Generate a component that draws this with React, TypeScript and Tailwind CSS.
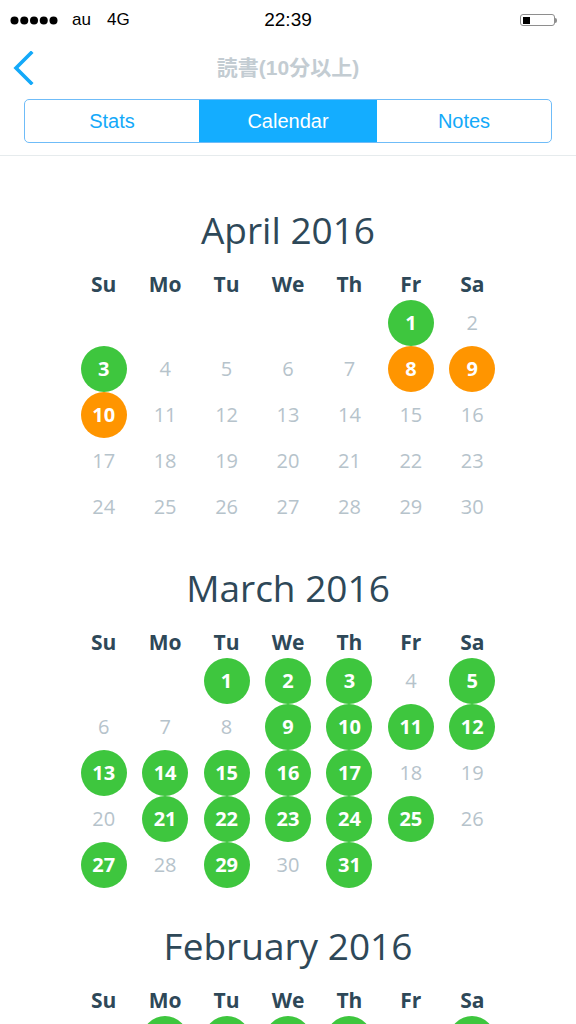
type Month = {
  title: string;
  offset: number;
  days: number;
  green: number[];
  orange: number[];
};

const weekdays = ['Su', 'Mo', 'Tu', 'We', 'Th', 'Fr', 'Sa'];

const months: Month[] = [
  { title: 'April 2016', offset: 5, days: 30, green: [1, 3], orange: [8, 9, 10] },
  {
    title: 'March 2016',
    offset: 2,
    days: 31,
    green: [1, 2, 3, 5, 9, 10, 11, 12, 13, 14, 15, 16, 17, 21, 22, 23, 24, 25, 27, 29, 31],
    orange: [],
  },
  { title: 'February 2016', offset: 1, days: 29, green: [1, 2, 3, 4, 6, 8, 9, 10], orange: [] },
];

function StatusBar() {
  return (
    <div className="relative flex h-10 items-center px-[10px] font-['Liberation_Sans',sans-serif] text-[17px] text-black">
      <svg width="48" height="9" viewBox="0 0 48 9">
        {[4.5, 14.25, 24, 33.75, 43.5].map((cx) => (
          <circle key={cx} cx={cx} cy="4.5" r="4" fill="#000" />
        ))}
      </svg>
      <span className="ml-[14px]">au</span>
      <span className="ml-[16px]">4G</span>
      <span className="absolute left-1/2 -translate-x-1/2 text-[19px]">22:39</span>
      <div className="ml-auto mr-[9px] flex items-center">
        <div className="flex h-[12px] w-[35px] items-center rounded-[3px] border border-[#8e8e8e] p-[1.5px]">
          <div className="h-full w-[7px] bg-black" />
        </div>
        <div className="h-[5px] w-[2px] rounded-r-sm bg-[#8e8e8e]" />
      </div>
    </div>
  );
}

function NavBar() {
  return (
    <div className="border-b border-[#e6ebed] pb-[12px]">
      <div className="relative flex h-[55px] items-center">
        <svg className="ml-[12px]" width="22" height="34" viewBox="0 0 22 34">
          <path d="M19 2 L4 17 L19 32" fill="none" stroke="#14a9f9" strokeWidth="3.6" strokeLinecap="square" />
        </svg>
        <span className="absolute left-1/2 -translate-x-1/2 font-['Liberation_Sans','Noto_Sans_CJK_JP',sans-serif] text-[21px] font-bold text-[#c3ccd2]">
          読書(10分以上)
        </span>
      </div>
      <div className="mx-[24px] mt-[4px] flex h-[44px] overflow-hidden rounded-[5px] border border-[#6fbcf8] font-['Liberation_Sans',sans-serif] text-[20px]">
        <div className="flex flex-1 items-center justify-center text-[#14a9f9]">Stats</div>
        <div className="flex w-[178px] items-center justify-center bg-[#14adff] text-white">Calendar</div>
        <div className="flex flex-1 items-center justify-center text-[#14a9f9]">Notes</div>
      </div>
    </div>
  );
}

function MonthBlock({ month }: { month: Month }) {
  const cells: (number | null)[] = [];
  for (let i = 0; i < month.offset; i++) cells.push(null);
  for (let d = 1; d <= month.days; d++) cells.push(d);

  return (
    <div className="mb-[32px]">
      <h2 className="h-[52px] text-center text-[37px] leading-[52px] text-[#2e4858]">{month.title}</h2>
      <div className="mx-auto mt-[13px] w-[430px]">
        <div className="mb-[1px] grid h-[30px] grid-cols-7 items-center">
          {weekdays.map((w) => (
            <div key={w} className="text-center text-[21px] font-bold text-[#2e4858]">
              {w}
            </div>
          ))}
        </div>
        <div className="grid grid-cols-7">
          {cells.map((d, i) => {
            if (d === null) return <div key={i} className="h-[46px]" />;
            const green = month.green.includes(d);
            const orange = month.orange.includes(d);
            return (
              <div key={i} className="flex h-[46px] items-center justify-center">
                {green || orange ? (
                  <div
                    className={
                      green
                        ? 'flex h-[46px] w-[46px] items-center justify-center rounded-full bg-[#3ec63e] text-[20px] font-bold text-white'
                        : 'flex h-[46px] w-[46px] items-center justify-center rounded-full bg-[#ff9500] text-[20px] font-bold text-white'
                    }
                  >
                    {d}
                  </div>
                ) : (
                  <span className="text-[20px] text-[#b6c3cb]">{d}</span>
                )}
              </div>
            );
          })}
        </div>
      </div>
    </div>
  );
}

export default function App() {
  return (
    <div className="h-[1024px] w-[576px] overflow-hidden bg-white">
      <StatusBar />
      <NavBar />
      <div className="pt-[48px] font-['Open_Sans',sans-serif]">
        {months.map((m) => (
          <MonthBlock key={m.title} month={m} />
        ))}
      </div>
    </div>
  );
}
